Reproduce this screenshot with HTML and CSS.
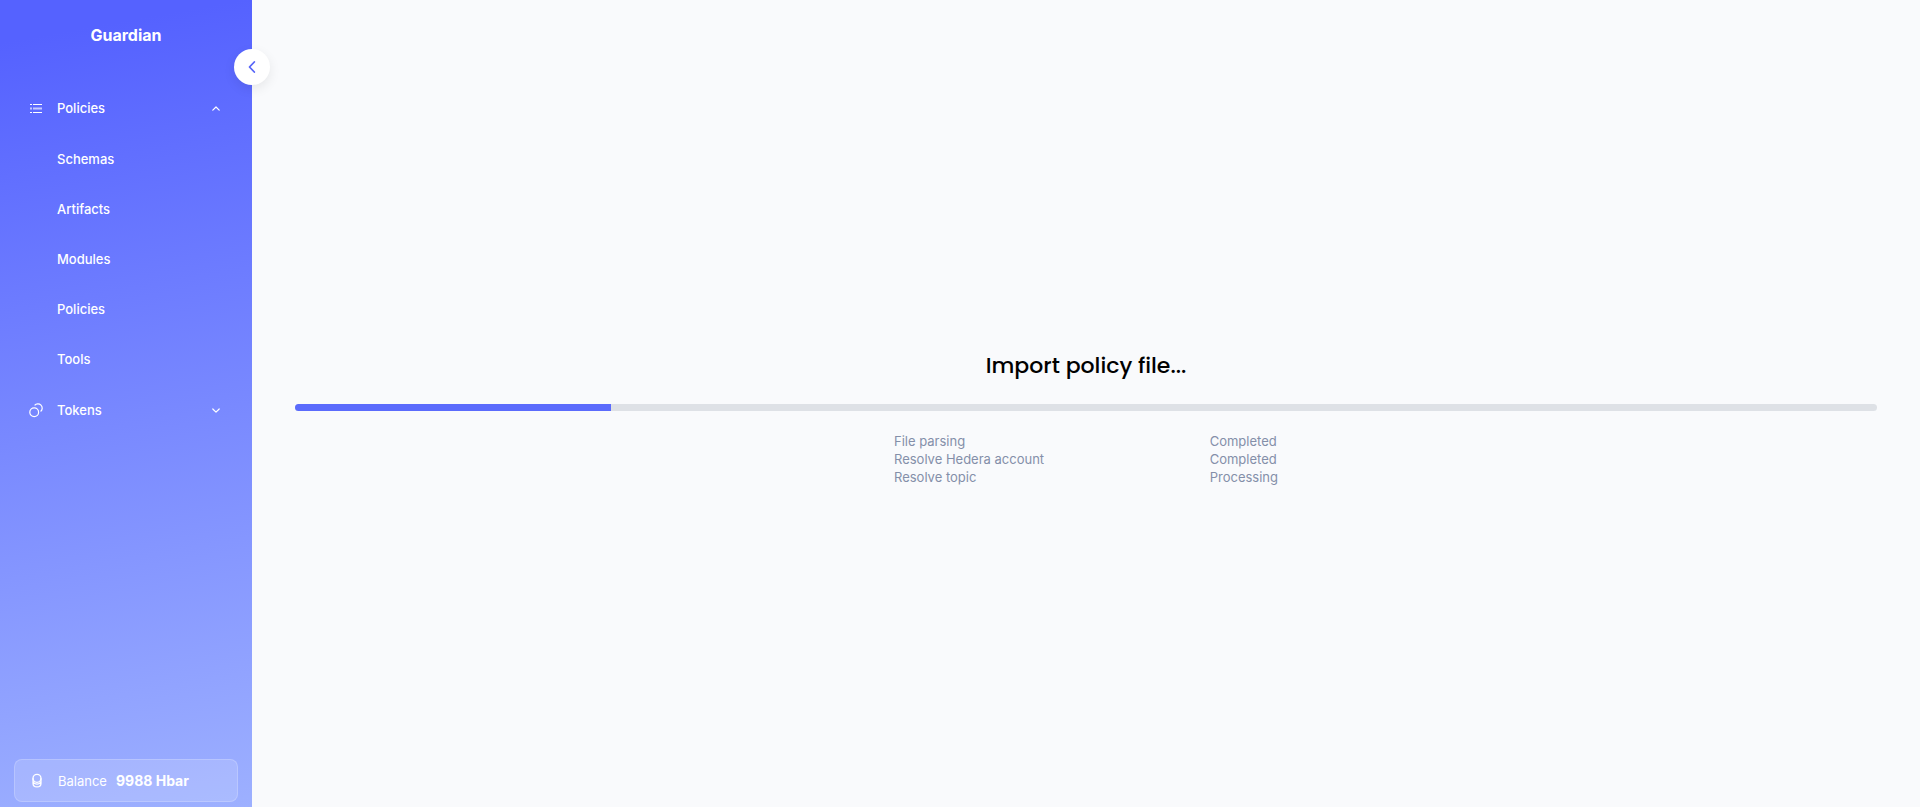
FILE: index.html
```html
<!DOCTYPE html>
<html lang="en">
<head>
<meta charset="utf-8">
<meta name="viewport" content="width=device-width, initial-scale=1">
<title>Guardian</title>
<link rel="stylesheet" href="styles.css">
</head>
<body>
<div class="layout">
  <aside class="sidebar">
    <div class="brand">Guardian</div>
    <button class="collapse" type="button" aria-label="Collapse menu">
      <svg width="16" height="16" viewBox="0 0 16 16" fill="none" stroke="currentColor" stroke-width="1.8" stroke-linecap="round" stroke-linejoin="round"><path d="M10.3 3 5.5 8l4.8 5"/></svg>
    </button>
    <nav class="menu">
      <button class="menu-item" type="button" aria-expanded="true">
        <svg class="menu-icon" width="16" height="16" viewBox="0 0 16 16" fill="currentColor"><path d="M2 4h2v1H2zM5 4h9v1H5zM2 12h2v1H2zM5 12h9v1H5z"/><path opacity=".65" d="M2 7.5h2v2H2zM5 7.5h9v2H5z"/></svg>
        <span class="menu-label">Policies</span>
        <svg width="12" height="12" viewBox="0 0 12 12" fill="none" stroke="currentColor" stroke-width="1.2" stroke-linecap="round" stroke-linejoin="round"><path d="M2.8 8.2 6 5l3.2 3.2"/></svg>
      </button>
      <div class="submenu">
        <a class="submenu-item" href="#schemas">Schemas</a>
        <a class="submenu-item" href="#artifacts">Artifacts</a>
        <a class="submenu-item" href="#modules">Modules</a>
        <a class="submenu-item" href="#policies">Policies</a>
        <a class="submenu-item" href="#tools">Tools</a>
      </div>
      <button class="menu-item" type="button" aria-expanded="false">
        <svg class="menu-icon" width="16" height="16" viewBox="0 0 16 16" fill="none" stroke="currentColor" stroke-width="1.2"><circle cx="6.2" cy="10.2" r="4.4"/><path d="M6.6 3.4A4.3 4.3 0 1 1 12.6 9.5"/></svg>
        <span class="menu-label">Tokens</span>
        <svg width="12" height="12" viewBox="0 0 12 12" fill="none" stroke="currentColor" stroke-width="1.2" stroke-linecap="round" stroke-linejoin="round"><path d="M2.8 5 6 8.2 9.2 5"/></svg>
      </button>
    </nav>
    <div class="balance">
      <svg class="menu-icon" width="16" height="16" viewBox="0 0 16 16" fill="none" stroke="currentColor" stroke-width="1.3"><circle cx="8" cy="5.3" r="4"/><path d="M4 5.3v4.9c0 5 8 5 8 0V5.3M4 7.6c0 4.6 8 4.6 8 0"/></svg>
      <span>Balance</span>
      <strong class="balance-value">9988 Hbar</strong>
    </div>
  </aside>
  <main class="content">
    <h1 class="title">Import policy file...</h1>
    <div class="progress" role="progressbar" aria-label="Import progress" aria-valuenow="20" aria-valuemin="0" aria-valuemax="100">
      <div class="progress-fill" style="width: 20%"></div>
    </div>
    <table class="steps">
      <tr><td>File parsing</td><td class="status">Completed</td></tr>
      <tr><td>Resolve Hedera account</td><td class="status">Completed</td></tr>
      <tr><td>Resolve topic</td><td class="status">Processing</td></tr>
    </table>
  </main>
</div>
</body>
</html>
```
FILE: styles.css
```css
* {
  box-sizing: border-box;
}

body {
  margin: 0;
  background: #f9fafc;
  font-family: Inter, "Liberation Sans", sans-serif;
  font-size: 13px;
}

button {
  border: 0;
  font: inherit;
  cursor: pointer;
}

.layout {
  display: flex;
  min-height: 100vh;
}

.sidebar {
  position: relative;
  display: flex;
  flex-direction: column;
  flex: 0 0 252px;
  padding: 23px 14px 5px;
  background: linear-gradient(170deg, #5562ff 5%, #9db0ff 100%);
  color: #fff;
}

.brand {
  margin-bottom: 36px;
  font-size: 16px;
  line-height: 24px;
  font-weight: 700;
  text-align: center;
}

.collapse {
  position: absolute;
  top: 49px;
  right: -18px;
  display: flex;
  align-items: center;
  justify-content: center;
  width: 36px;
  height: 36px;
  padding: 0;
  border-radius: 50%;
  background: #fff;
  color: #5765f8;
  box-shadow: 0 4px 12px rgba(0, 0, 0, 0.08);
}

.menu {
  display: flex;
  flex-direction: column;
  font-weight: 500;
}

.menu-item {
  display: flex;
  align-items: center;
  height: 50px;
  padding: 0 16px 0 14px;
  background: none;
  color: inherit;
  text-align: left;
}

.menu-icon {
  flex: none;
  margin-right: 13px;
}

.menu-label {
  flex: 1;
}

.submenu {
  display: flex;
  flex-direction: column;
  padding: 1px 0;
}

.submenu-item {
  padding-left: 43px;
  line-height: 50px;
  color: inherit;
  text-decoration: none;
}

.balance {
  display: flex;
  align-items: center;
  height: 43px;
  margin-top: auto;
  padding: 0 14px;
  border: 1px solid rgba(255, 255, 255, 0.2);
  border-radius: 8px;
  background: rgba(255, 255, 255, 0.15);
}

.balance-value {
  margin-left: 9px;
  font-size: 14px;
  font-weight: 700;
}

.content {
  display: flex;
  flex: 1;
  flex-direction: column;
  align-items: center;
  justify-content: center;
  padding: 58px 43px 32px;
}

.title {
  margin: 0 0 20px;
  color: #000;
  font-family: Poppins, Inter, "Liberation Sans", sans-serif;
  font-size: 22px;
  line-height: 36px;
  font-weight: 500;
}

.progress {
  width: 100%;
  height: 7px;
  margin-bottom: 21px;
  overflow: hidden;
  border-radius: 4px;
  background: #dee1e6;
}

.progress-fill {
  height: 100%;
  background: #5b6bfc;
}

.steps {
  width: 384px;
  border-collapse: collapse;
  color: #848fa9;
  line-height: 18px;
}

.steps td {
  padding: 0;
}

.steps .status {
  width: 66px;
}
```
